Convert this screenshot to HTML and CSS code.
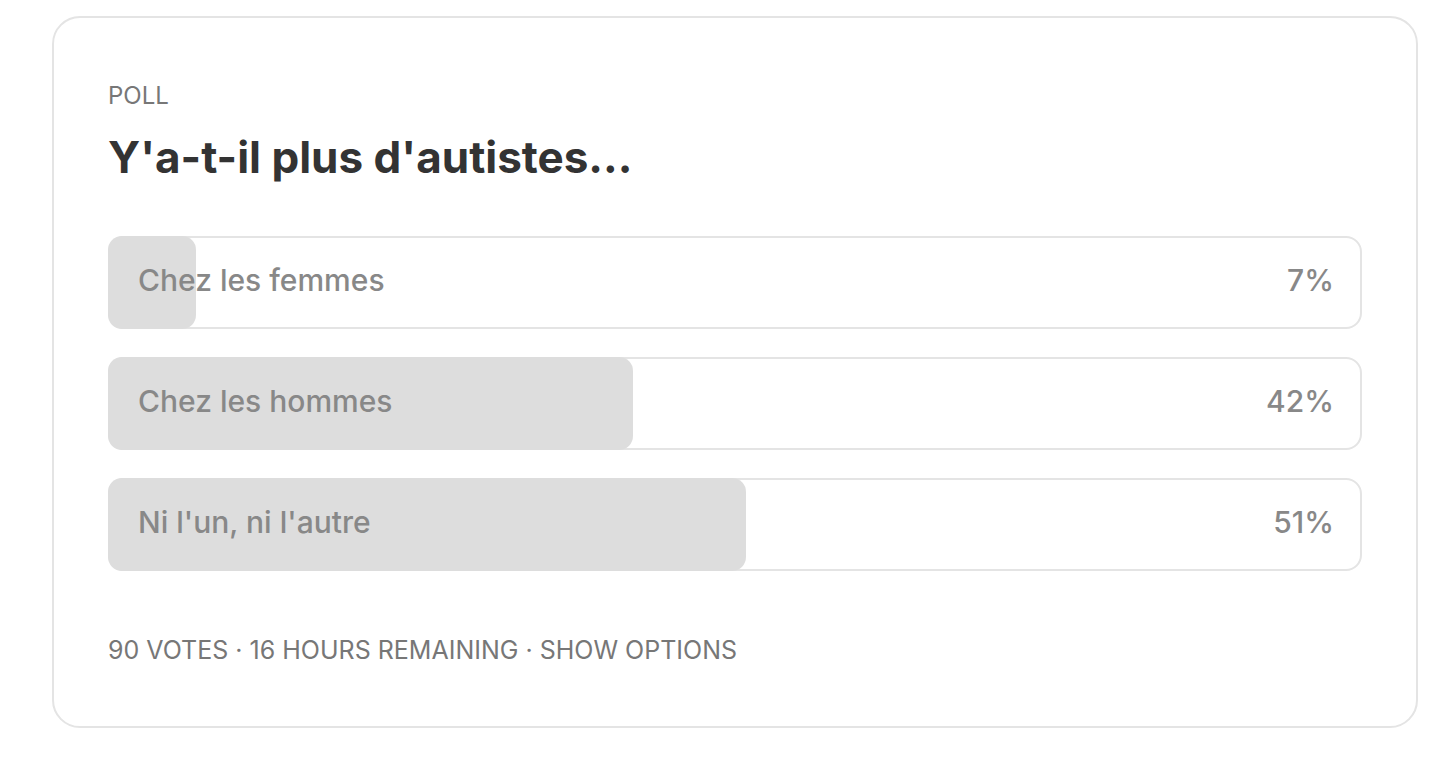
FILE: index.html
```html
<!DOCTYPE html>
<html lang="fr">
  <head>
    <meta charset="UTF-8" />
    <meta name="viewport" content="width=device-width, initial-scale=1.0" />
    <title>Poll</title>
    <link rel="stylesheet" href="styles.css">
  </head>
  <body>
    <div class="poll">
      <div class="poll-label">POLL</div>
      <h2 class="poll-title">Y'a-t-il plus d'autistes...</h2>
      <div class="options">
        <div class="option">
          <div class="fill" style="width: 7%"></div>
          <span class="opt-text">Chez les femmes</span>
          <span class="opt-pct">7%</span>
        </div>
        <div class="option">
          <div class="fill" style="width: 42%"></div>
          <span class="opt-text">Chez les hommes</span>
          <span class="opt-pct">42%</span>
        </div>
        <div class="option">
          <div class="fill" style="width: 51%"></div>
          <span class="opt-text">Ni l'un, ni l'autre</span>
          <span class="opt-pct">51%</span>
        </div>
      </div>
      <div class="poll-footer">90 VOTES · 16 HOURS REMAINING · SHOW OPTIONS</div>
    </div>
  </body>
</html>
```
FILE: styles.css
```css
body {
  margin: 0;
  padding: 16px 38px 0 52px;
  background: #fff;
  font-family: Inter, "Noto Sans", "Liberation Sans", sans-serif;
}

.poll {
  border: 2px solid #e4e4e4;
  border-radius: 28px;
  padding: 62px 54px 60px 54px;
}

.poll-label {
  font-size: 24px;
  line-height: 32px;
  color: #777;
}

.poll-title {
  margin: 19px 0 53px 0;
  font-size: 44px;
  line-height: 52px;
  font-weight: 700;
  color: #333;
}

.options {
  display: flex;
  flex-direction: column;
  gap: 28px;
}

.option {
  position: relative;
  display: flex;
  align-items: center;
  justify-content: space-between;
  height: 84px;
  padding: 0 26px 5px 28px;
  border: 2px solid #e4e4e4;
  border-radius: 16px;
}

.fill {
  position: absolute;
  top: -2px;
  bottom: -2px;
  left: -2px;
  background: #dddddd;
  border-radius: 14px;
}

.opt-text,
.opt-pct {
  position: relative;
  font-size: 30px;
  font-weight: 500;
  color: #888;
}

.poll-footer {
  margin-top: 63px;
  font-size: 25px;
  line-height: 32px;
  color: #777;
}
```
